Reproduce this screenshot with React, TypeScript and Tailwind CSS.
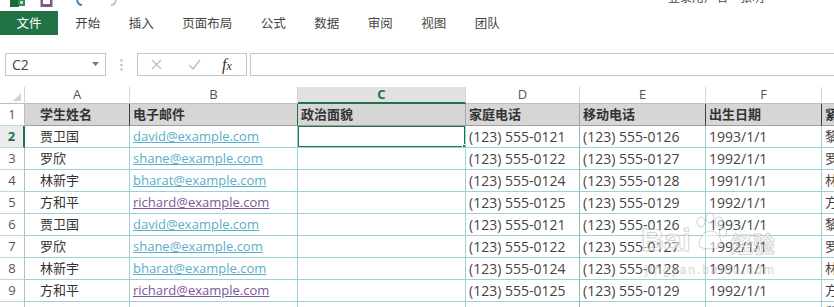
import React from 'react';

type Row = {
  name: string;
  email: string;
  visited: boolean;
  home: string;
  mobile: string;
  birth: string;
  contact: string;
};

const base: Row[] = [
  { name: '贾卫国', email: 'david@example.com', visited: false, home: '(123) 555-0121', mobile: '(123) 555-0126', birth: '1993/1/1', contact: '黎明' },
  { name: '罗欣', email: 'shane@example.com', visited: false, home: '(123) 555-0122', mobile: '(123) 555-0127', birth: '1992/1/1', contact: '罗小' },
  { name: '林新宇', email: 'bharat@example.com', visited: false, home: '(123) 555-0124', mobile: '(123) 555-0128', birth: '1991/1/1', contact: '林宇' },
  { name: '方和平', email: 'richard@example.com', visited: true, home: '(123) 555-0125', mobile: '(123) 555-0129', birth: '1992/1/1', contact: '方平' },
];
const rows: Row[] = [...base, ...base, base[0]];

const tabs = ['开始', '插入', '页面布局', '公式', '数据', '审阅', '视图', '团队'];

function TopStrip() {
  return (
    <div className="flex h-[11px] items-start overflow-hidden">
      <svg className="ml-[10px]" width="16" height="8" viewBox="0 0 16 8">
        <rect x="0" y="0" width="9" height="7" fill="#1d6b3f" />
        <rect x="8" y="0" width="7" height="6" fill="#2e8b57" />
        <rect x="10" y="1" width="3" height="3" fill="#ffffff" opacity="0.7" />
      </svg>
      <svg className="ml-[14px]" width="13" height="8" viewBox="0 0 13 8">
        <rect x="0.5" y="0" width="12" height="7" fill="#7d5d86" />
        <rect x="3" y="0" width="7" height="4" fill="#ffffff" />
      </svg>
      <svg className="ml-[23px]" width="8" height="8" viewBox="0 0 8 8">
        <path d="M1 0 Q2 5 6 5" stroke="#4d7cb3" strokeWidth="2" fill="none" />
      </svg>
      <svg className="ml-[25px]" width="8" height="8" viewBox="0 0 8 8">
        <path d="M7 0 Q6 5 2 5" stroke="#c4c4c4" strokeWidth="2" fill="none" />
      </svg>
      <div className="ml-auto mr-[70px] flex gap-[12px] text-[12px] leading-[12px] text-[#444] -mt-[9px] font-['Noto_Sans_CJK_SC',sans-serif]">
        <span>登录用户名</span>
        <span>张明</span>
      </div>
    </div>
  );
}

function Tabs() {
  return (
    <div className="flex h-[24px] items-stretch font-['Noto_Sans_CJK_SC',sans-serif] text-[12.5px]">
      <div className="flex w-[58px] items-center justify-center bg-[#217346] text-white">文件</div>
      <div className="ml-[3px] flex">
        {tabs.map((t) => (
          <div key={t} className="flex items-center px-[14.25px] text-[#444]">
            {t}
          </div>
        ))}
      </div>
    </div>
  );
}

function FormulaBar() {
  return (
    <div className="flex h-[23px] items-stretch">
      <div className="ml-[5px] flex w-[101px] items-center justify-between border border-[#c6c6c6] pl-[6px] pr-[6px]">
        <span className="font-['Open_Sans',sans-serif] text-[14px] text-[#444]">C2</span>
        <svg width="7" height="5" viewBox="0 0 7 5">
          <path d="M0 0 H7 L3.5 4 Z" fill="#777" />
        </svg>
      </div>
      <div className="flex w-[31px] items-center justify-center">
        <svg width="3" height="12" viewBox="0 0 3 12">
          <rect x="0.5" y="0.5" width="2" height="2" fill="#b5b5b5" />
          <rect x="0.5" y="5" width="2" height="2" fill="#b5b5b5" />
          <rect x="0.5" y="9.5" width="2" height="2" fill="#b5b5b5" />
        </svg>
      </div>
      <div className="flex w-[110px] items-center border border-[#c6c6c6]">
        <svg className="ml-[13px]" width="11" height="11" viewBox="0 0 11 11">
          <path d="M1 1 L10 10 M10 1 L1 10" stroke="#bdbdbd" strokeWidth="1.3" />
        </svg>
        <svg className="ml-[26px]" width="13" height="11" viewBox="0 0 13 11">
          <path d="M1 6 L5 10 L12 1" stroke="#bdbdbd" strokeWidth="1.4" fill="none" />
        </svg>
        <span className="ml-[21px] font-['Liberation_Serif',serif] text-[16px] italic leading-none text-[#333]">
          f<span className="text-[12px]">x</span>
        </span>
      </div>
      <div className="ml-[3px] flex-1 border-y border-l border-[#c6c6c6]" />
    </div>
  );
}

const hdr = 'flex items-center justify-center border-r border-b border-r-[#d5d5d5] border-b-[#bdbdbd] text-[13px] text-[#555] bg-white';
const rowHdr = 'flex items-center justify-center border-r border-b border-r-[#bdbdbd] border-b-[#b9dbe0] text-[13px] text-[#555]';
const cell = 'flex items-center overflow-hidden whitespace-nowrap border-r border-b border-r-[#9dd0d9] border-b-[#9dd0d9]';
const h1 = 'flex items-center overflow-hidden whitespace-nowrap border-b border-b-[#9e9e9e] bg-[#d6d6d6] text-[13px] font-bold text-[#333] border-r';

function Grid() {
  return (
    <div className="grid grid-cols-[25px_105px_168px_168px_114px_126px_116px_12px] grid-rows-[17px_repeat(10,22px)] font-['Open_Sans','Noto_Sans_CJK_SC',sans-serif]">
      {/* column headers */}
      <div className="relative border-r border-b border-r-[#d5d5d5] border-b-[#bdbdbd] bg-white">
        <svg className="absolute right-[3px] bottom-[2px]" width="8" height="8" viewBox="0 0 8 8">
          <path d="M8 0 L8 8 L0 8 Z" fill="#d2d2d2" />
        </svg>
      </div>
      <div className={hdr}>A</div>
      <div className={hdr}>B</div>
      <div className="flex items-center justify-center border-r border-r-[#d5d5d5] border-b-2 border-b-[#217346] bg-[#e1e1e1] text-[13px] font-bold text-[#217346]">
        C
      </div>
      <div className={hdr}>D</div>
      <div className={hdr}>E</div>
      <div className={hdr}>F</div>
      <div className="border-b border-b-[#bdbdbd] bg-white" />

      {/* row 1 */}
      <div className={rowHdr}>1</div>
      <div className={`${h1} border-r-[#3f3f3f] pl-[15px]`}>学生姓名</div>
      <div className={`${h1} border-r-[#217346] pl-[3px]`}>电子邮件</div>
      <div className={`${h1} border-r-[#a6a6a6] pl-[3px]`}>政治面貌</div>
      <div className={`${h1} border-r-[#a6a6a6] pl-[3px]`}>家庭电话</div>
      <div className={`${h1} border-r-[#3f3f3f] pl-[3px]`}>移动电话</div>
      <div className={`${h1} border-r-[#3f3f3f] pl-[3px]`}>出生日期</div>
      <div className={`${h1} border-r-0 pl-[3px]`}>紧急联系人</div>

      {rows.map((r, i) => {
        const n = i + 2;
        const sel = n === 2;
        return (
          <React.Fragment key={n}>
            {sel ? (
              <div className="flex items-center justify-center border-r-2 border-b border-r-[#217346] border-b-[#b9dbe0] bg-[#ececec] text-[13px] font-bold text-[#217346]">
                {n}
              </div>
            ) : (
              <div className={rowHdr}>{n}</div>
            )}
            <div className={`${cell} pl-[15px] text-[13px] text-[#333]`}>{r.name}</div>
            <div className={`${cell} pl-[3px] text-[13px]`}>
              <span className={r.visited ? 'text-[#7d559a] underline' : 'text-[#5aaec8] underline'}>{r.email}</span>
            </div>
            <div className={`${cell} relative`}>
              {sel && (
                <>
                  <div className="absolute -left-[1px] -top-[1px] z-10 h-[calc(100%+2px)] w-[calc(100%+2px)] border-2 border-[#217346]" />
                  <div className="absolute -right-[4px] -bottom-[4px] z-20 h-[7px] w-[7px] border border-white bg-[#217346]" />
                </>
              )}
            </div>
            <div className={`${cell} pl-[3px] text-[14px] text-[#444] border-r-[#98b6bb]`}>{r.home}</div>
            <div className={`${cell} pl-[3px] text-[14px] text-[#444]`}>{r.mobile}</div>
            <div className={`${cell} pl-[3px] text-[14px] text-[#444]`}>{r.birth}</div>
            <div className={`${cell} pl-[3px] text-[13px] text-[#444] border-r-0`}>{r.contact}</div>
          </React.Fragment>
        );
      })}
    </div>
  );
}

function Watermark() {
  return (
    <div className="pointer-events-none absolute left-[641px] top-[212px] z-30 flex flex-col opacity-55">
      <div className="flex items-end">
        <span className="font-['Liberation_Sans',sans-serif] text-[32px] font-bold leading-none text-white [-webkit-text-stroke:1px_rgba(110,110,110,0.55)]">
          Bai
        </span>
        <svg className="mb-[4px] ml-[2px]" width="34" height="40" viewBox="0 0 34 40">
          <g fill="white" stroke="rgba(110,110,110,0.55)" strokeWidth="1">
            <ellipse cx="8" cy="10" rx="4" ry="5" />
            <ellipse cx="17" cy="6" rx="4" ry="5" />
            <ellipse cx="26" cy="10" rx="4" ry="5" />
            <ellipse cx="30" cy="20" rx="3.5" ry="4.5" />
            <path d="M6 34 C6 24 12 19 18 19 C24 19 29 26 28 33 C27 38 9 38 6 34 Z" />
          </g>
        </svg>
        <span className="mb-[3px] ml-[4px] font-['Noto_Sans_CJK_SC',sans-serif] text-[22px] font-bold leading-none text-white [-webkit-text-stroke:1px_rgba(110,110,110,0.55)]">
          经验
        </span>
      </div>
      <span className="mt-[8px] ml-[4px] font-['Liberation_Sans',sans-serif] text-[12px] leading-none tracking-[2px] text-white [-webkit-text-stroke:0.6px_rgba(110,110,110,0.5)]">
        jingyan.baidu.com
      </span>
    </div>
  );
}

export default function App() {
  return (
    <div className="relative h-[307px] w-[834px] overflow-hidden bg-white">
      <TopStrip />
      <Tabs />
      <div className="h-[18px]" />
      <FormulaBar />
      <div className="h-[11px]" />
      <Grid />
      <Watermark />
    </div>
  );
}
